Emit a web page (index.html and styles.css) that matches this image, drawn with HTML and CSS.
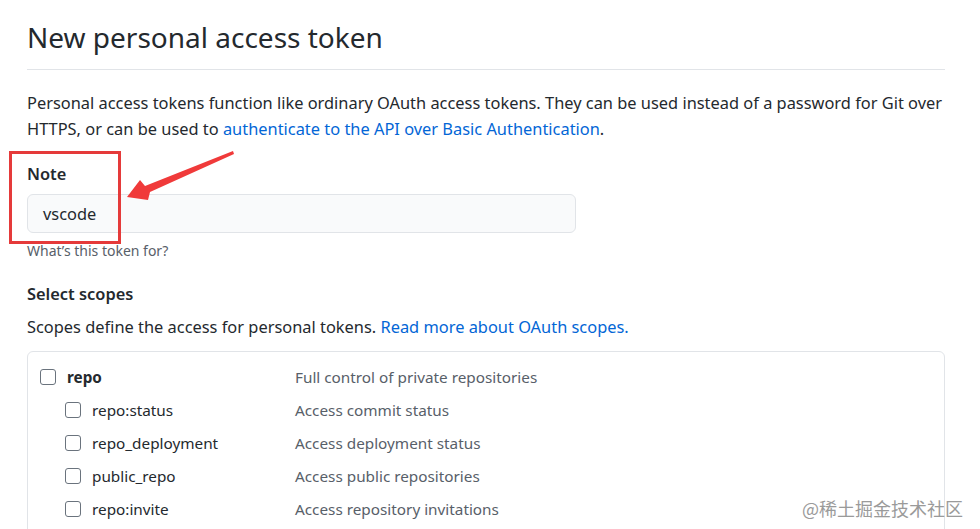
FILE: index.html
```html
<!DOCTYPE html>
<html>
<head>
<meta charset="utf-8">
<link rel="stylesheet" href="styles.css">
</head>
<body>
<div class="page">
  <h2 class="title">New personal access token</h2>
  <p class="intro">Personal access tokens function like ordinary OAuth access tokens. They can be used instead of a password for Git over HTTPS, or can be used to <a href="#">authenticate to the API over Basic Authentication</a>.</p>
  <div class="field">
    <label class="label">Note</label>
    <div class="input">vscode</div>
    <p class="hint">What’s this token for?</p>
  </div>
  <h3 class="label scopes-title">Select scopes</h3>
  <p class="scopes-desc">Scopes define the access for personal tokens. <a href="#">Read more about OAuth scopes.</a></p>
  <div class="scopes">
    <div class="row main"><span class="cb"></span><span class="name bold">repo</span><span class="desc">Full control of private repositories</span></div>
    <div class="row sub"><span class="cb"></span><span class="name">repo:status</span><span class="desc">Access commit status</span></div>
    <div class="row sub"><span class="cb"></span><span class="name">repo_deployment</span><span class="desc">Access deployment status</span></div>
    <div class="row sub"><span class="cb"></span><span class="name">public_repo</span><span class="desc">Access public repositories</span></div>
    <div class="row sub"><span class="cb"></span><span class="name">repo:invite</span><span class="desc">Access repository invitations</span></div>
  </div>
</div>
<div class="highlight"></div>
<svg class="arrow" width="980" height="529" viewBox="0 0 980 529">
  <polygon points="127,197 140,180 145,186 233,151 234,154 150,192 148,200" fill="#f03a3a"/>
</svg>
<div class="watermark">@稀土掘金技术社区</div>
</body>
</html>
```
FILE: styles.css
```css
* { box-sizing: border-box; }
html, body { margin: 0; padding: 0; background: #fff; }
body {
  font-family: "Noto Sans", "Open Sans", sans-serif;
  color: #24292e;
  width: 980px;
  height: 529px;
  overflow: hidden;
  position: relative;
}
.page {
  padding: 17px 35px 0 27px;
}
.title {
  font-weight: 400;
  font-size: 28px;
  line-height: 40px;
  margin: 0;
  padding-bottom: 12px;
  border-bottom: 1px solid #e1e4e8;
}
.intro {
  font-size: 16.4px;
  line-height: 26px;
  margin: 20px 0 0;
}
a { color: #0366d6; text-decoration: none; }
.field { margin-top: 21px; }
.label {
  display: block;
  font-size: 16.4px;
  font-weight: 600;
  line-height: 22px;
  margin: 0;
}
.input {
  margin-top: 9px;
  width: 549px;
  height: 39px;
  border: 1px solid #e1e4e8;
  border-radius: 6px;
  background: #f9fafb;
  font-size: 16.4px;
  line-height: 37px;
  padding-left: 15px;
}
.hint {
  margin: 9px 0 0;
  font-size: 14px;
  line-height: 18px;
  color: #586069;
}
.scopes-title { margin-top: 23px; }
.scopes-desc {
  font-size: 16.4px;
  line-height: 24px;
  margin: 10px 0 0;
}
.scopes {
  margin-top: 12px;
  border: 1px solid #e1e4e8;
  border-radius: 6px;
  height: 200px;
  padding: 8px 0 0 12px;
}
.row {
  display: flex;
  align-items: center;
  height: 33px;
  font-size: 15.3px;
}
.row.sub { padding-left: 25px; }
.cb {
  width: 16px;
  height: 16px;
  border: 1px solid #6a737d;
  border-radius: 3px;
  margin-right: 11px;
  flex: none;
}
.name { flex: none; }
.row.main .name { width: 228px; }
.row.sub .name { width: 203px; }
.bold { font-weight: 700; }
.desc { color: #586069; }
.highlight {
  position: absolute;
  left: 9px;
  top: 151px;
  width: 112px;
  height: 93px;
  border: 3px solid #e53a3a;
}
.arrow { position: absolute; left: 0; top: 0; }
.watermark {
  position: absolute;
  left: 802px;
  top: 495px;
  font-family: "Noto Sans CJK SC", sans-serif;
  font-size: 18px;
  color: #9a9a9a;
  line-height: 26px;
}
```
